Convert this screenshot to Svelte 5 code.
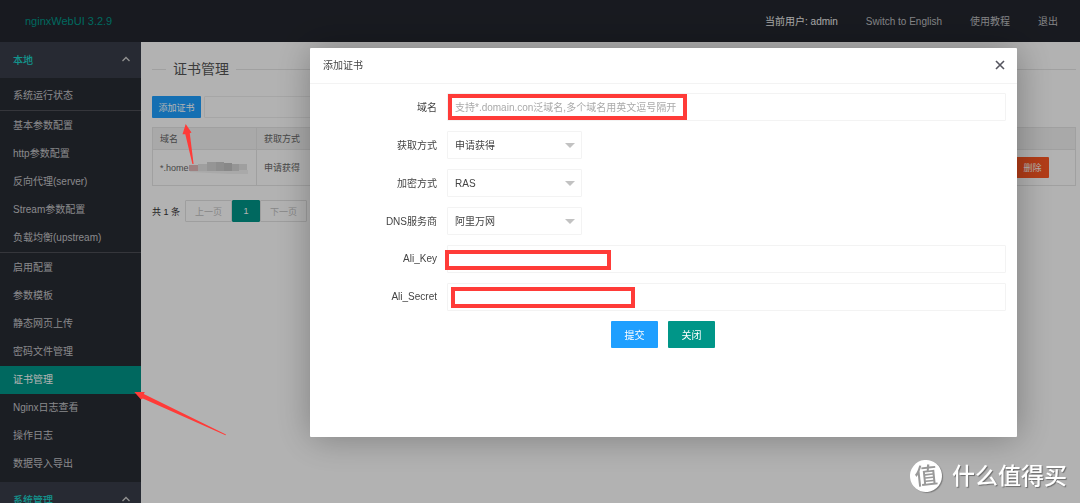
<script lang="ts">
	let domain = $state('');
	let method = $state('申请获得');
	let encryption = $state('RAS');
	let dns = $state('阿里万网');
	let aliKey = $state('');
	let aliSecret = $state('');

	const nav = ['Switch to English', '使用教程', '退出'];

	const groups = [
		['系统运行状态'],
		['基本参数配置', 'http参数配置', '反向代理(server)', 'Stream参数配置', '负载均衡(upstream)'],
		[
			'启用配置',
			'参数模板',
			'静态网页上传',
			'密码文件管理',
			'证书管理',
			'Nginx日志查看',
			'操作日志',
			'数据导入导出'
		]
	];
	const current = '证书管理';
</script>

{#snippet caret()}
	<svg class="caret" viewBox="0 0 10 6" aria-hidden="true">
		<path d="M1.5 5 L5 1.5 L8.5 5" />
	</svg>
{/snippet}

<div class="page">
	<header>
		<div class="logo">nginxWebUI 3.2.9</div>
		<nav>
			<span class="user">当前用户: admin</span>
			{#each nav as item}
				<a href="#top">{item}</a>
			{/each}
		</nav>
	</header>

	<div class="body">
		<aside>
			<button class="group" type="button">本地 {@render caret()}</button>
			<div class="menu">
				{#each groups as group}
					<ul>
						{#each group as item}
							<li><a href="#menu" class:active={item === current}>{item}</a></li>
						{/each}
					</ul>
				{/each}
			</div>
			<button class="group" type="button">系统管理 {@render caret()}</button>
		</aside>

		<main>
			<h1>证书管理</h1>
			<div class="toolbar">
				<button class="add" type="button">添加证书</button>
				<input type="text" aria-label="搜索" />
			</div>
			<table>
				<thead>
					<tr>
						<th class="name">域名</th>
						<th>获取方式</th>
						<th class="ops"></th>
					</tr>
				</thead>
				<tbody>
					<tr>
						<td>
							<div class="host">
								*.home
								<svg class="mosaic" viewBox="0 0 60 14" aria-hidden="true">
									<path fill="#f3f3f3" d="M1 9h58v4H40L1 11z" />
									<path fill="#e3b9b9" d="M0 4h9v6H0z" />
									<path fill="#e4e4e4" d="M9 3h9v7H9zM50 3h8v6h-8z" />
									<path fill="#d6d6d6" d="M18 1h9v9h-9zM43 3h7v7h-7z" />
									<path fill="#cccccc" d="M27 1h8v9h-8z" />
									<path fill="#c3c3c3" d="M35 2h8v8h-8z" />
								</svg>
							</div>
						</td>
						<td>申请获得</td>
						<td class="ops"><button class="delete" type="button">删除</button></td>
					</tr>
				</tbody>
			</table>
			<div class="pager">
				<span>共 1 条</span>
				<div class="pages">
					<button type="button" disabled>上一页</button>
					<button type="button" class="on">1</button>
					<button type="button" disabled>下一页</button>
				</div>
			</div>
		</main>
	</div>
</div>

<div class="shade">
	<div class="dialog" role="dialog" aria-labelledby="dialog-title">
		<div class="title">
			<span id="dialog-title">添加证书</span>
			<button type="button" class="close" aria-label="关闭窗口">
				<svg viewBox="0 0 10 10" aria-hidden="true"><path d="M1 1 L9 9 M9 1 L1 9" /></svg>
			</button>
		</div>
		<form onsubmit={(e) => e.preventDefault()}>
			<div class="row">
				<label for="domain">域名</label>
				<input
					id="domain"
					type="text"
					placeholder="支持*.domain.con泛域名,多个域名用英文逗号隔开"
					bind:value={domain}
				/>
			</div>
			<div class="row">
				<label for="method">获取方式</label>
				<div class="select">
					<select id="method" bind:value={method}>
						<option>申请获得</option>
					</select>
				</div>
			</div>
			<div class="row">
				<label for="encryption">加密方式</label>
				<div class="select">
					<select id="encryption" bind:value={encryption}>
						<option>RAS</option>
					</select>
				</div>
			</div>
			<div class="row">
				<label for="dns">DNS服务商</label>
				<div class="select">
					<select id="dns" bind:value={dns}>
						<option>阿里万网</option>
					</select>
				</div>
			</div>
			<div class="row">
				<label for="key">Ali_Key</label>
				<input id="key" type="text" bind:value={aliKey} />
			</div>
			<div class="row">
				<label for="secret">Ali_Secret</label>
				<input id="secret" type="text" bind:value={aliSecret} />
			</div>
			<div class="buttons">
				<button type="submit" class="submit">提交</button>
				<button type="button">关闭</button>
			</div>
		</form>
	</div>
</div>

<!-- red marks drawn over the page -->
<svg class="marks" width="1080" height="503" aria-hidden="true">
	<g class="box">
		<rect x="450" y="96" width="235" height="22" />
		<rect x="447" y="252" width="162" height="16" />
		<rect x="453" y="289" width="180" height="17" />
	</g>
	<path d="M185.7 124 L191.5 132.5 L189.8 133.2 L193.6 164 L192.4 164 L185.3 134.2 L182.5 134.2 Z" />
	<path d="M134.3 392 L144.8 392 L143.8 394 L226 434.6 L225.5 435.2 L142.8 398.4 L141 399.5 Z" />
</svg>

<div class="watermark">
	<span class="badge">值</span>
	<span>什么值得买</span>
</div>

<style>
	:global(body) {
		overflow: hidden;
		font-family: 'Liberation Sans', 'Noto Sans CJK SC', sans-serif;
		font-size: 10px;
		color: #666;
	}

	button,
	input,
	select {
		box-sizing: border-box;
		margin: 0;
		padding: 0;
		border: 0;
		border-radius: 1px;
		font: inherit;
		color: inherit;
		background: none;
	}

	a {
		color: inherit;
		text-decoration: none;
	}

	.page {
		display: flex;
		flex-direction: column;
		height: 100vh;
		background: #fff;
	}

	header {
		display: flex;
		flex: none;
		align-items: center;
		justify-content: space-between;
		height: 42px;
		padding: 0 22px 0 25px;
		background: #23262e;
	}

	.logo {
		font-size: 11px;
		color: #009688;
	}

	nav {
		display: flex;
		align-items: baseline;
		gap: 28px;
		padding-bottom: 2px;
		color: #bdbec0;
	}

	.user {
		color: #f0f0f0;
	}

	.body {
		display: flex;
		flex: 1;
		min-height: 0;
	}

	aside {
		flex: none;
		width: 141px;
		overflow: hidden;
		background: #393d49;
		color: #c4c5c8;
	}

	.group {
		display: flex;
		align-items: center;
		justify-content: space-between;
		width: 100%;
		height: 36px;
		padding: 0 10px 2px 13px;
		font-weight: 500;
		color: #1bd4cb;
	}

	.caret {
		width: 10px;
		height: 6px;
		fill: none;
		stroke: #d0d0d0;
		stroke-width: 1.3;
	}

	.menu {
		padding: 4px 0;
		background: #282b33;
	}

	ul {
		margin: 0;
		padding: 0;
		list-style: none;
	}

	ul + ul {
		padding-top: 1px;
		border-top: 1px solid #4c4e55;
	}

	li a {
		display: block;
		padding-left: 13px;
		line-height: 28px;
	}

	.active {
		background: #009688;
		color: #fff;
	}

	main {
		flex: 1;
		min-width: 0;
		padding: 16px 4px 0 11px;
		font-size: 9px;
	}

	h1 {
		display: flex;
		align-items: center;
		gap: 7px;
		margin: 0 0 16px;
		font-size: 14px;
		font-weight: 400;
		line-height: 22px;
		color: #555;
	}

	h1::before,
	h1::after {
		content: '';
		width: 14px;
		border-top: 1px solid #e6e6e6;
	}

	h1::after {
		flex: 1;
	}

	.toolbar {
		display: flex;
		gap: 3px;
		margin-bottom: 9px;
	}

	.toolbar input {
		width: 300px;
		border: 1px solid #eee;
	}

	.add {
		width: 49px;
		height: 22px;
		background: #1e9fff;
		color: #fff;
	}

	table {
		width: 100%;
		table-layout: fixed;
		border-collapse: collapse;
	}

	th,
	td {
		box-sizing: border-box;
		height: 36px;
		padding: 0 7px;
		border: 1px solid #e6e6e6;
		font-weight: 400;
		text-align: left;
	}

	th {
		height: 22px;
		background: #f2f2f2;
	}

	.name {
		width: 104px;
	}

	.ops {
		width: 94px;
		padding-right: 26px;
		text-align: right;
	}

	.host {
		display: flex;
		align-items: center;
	}

	.mosaic {
		width: 60px;
		height: 14px;
	}

	.delete {
		width: 33px;
		height: 21px;
		background: #ff5722;
		color: #fff;
	}

	.pager {
		display: flex;
		align-items: center;
		gap: 5px;
		margin-top: 14px;
		color: #333;
	}

	.pages {
		display: flex;
	}

	.pages button {
		width: 47px;
		height: 22px;
		border: 1px solid #e2e2e2;
		color: #c2c2c2;
	}

	.pages .on {
		width: 28px;
		border-color: #009688;
		background: #009688;
		color: #fff;
	}

	.shade {
		position: fixed;
		inset: 0;
		box-sizing: border-box;
		padding: 48px 63px 0 310px;
		background: rgba(0, 0, 0, 0.3);
	}

	.dialog {
		box-sizing: border-box;
		min-height: 389px;
		border-radius: 1px;
		background: #fff;
		box-shadow: 1px 1px 36px rgba(0, 0, 0, 0.3);
	}

	.title {
		display: flex;
		box-sizing: border-box;
		align-items: center;
		justify-content: space-between;
		height: 36px;
		padding: 0 12px 2px 13px;
		border-bottom: 1px solid #f3f3f3;
		color: #444;
	}

	.close {
		display: flex;
	}

	.close svg {
		width: 10px;
		height: 10px;
		fill: none;
		stroke: #55555f;
		stroke-width: 1.6;
	}

	form {
		display: flex;
		flex-direction: column;
		gap: 10px;
		padding: 9px 11px 0 0;
		color: #444;
	}

	.row {
		display: flex;
		align-items: center;
		gap: 10px;
	}

	label {
		width: 127px;
		padding-bottom: 2px;
		text-align: right;
	}

	.row input,
	select {
		height: 28px;
		padding: 0 7px;
		border: 1px solid #f3f3f3;
	}

	.row input {
		flex: 1;
	}

	.row input::placeholder {
		color: #aaa;
	}

	.select {
		position: relative;
		width: 135px;
	}

	.select::after {
		content: '';
		position: absolute;
		top: 12px;
		right: 7px;
		border: 5px solid transparent;
		border-top-color: #c2c2c2;
		pointer-events: none;
	}

	select {
		width: 100%;
		appearance: none;
	}

	.buttons {
		display: flex;
		justify-content: center;
		gap: 10px;
		padding-left: 10px;
	}

	.buttons button {
		width: 47px;
		height: 27px;
		background: #009688;
		color: #fff;
	}

	.buttons .submit {
		background: #1e9fff;
	}

	.marks {
		position: fixed;
		top: 0;
		left: 0;
		fill: #ff3b38;
		pointer-events: none;
	}

	.box {
		fill: none;
		stroke: #ff3b38;
		stroke-width: 4;
	}

	.watermark {
		position: fixed;
		right: 13px;
		bottom: 11px;
		display: flex;
		align-items: center;
		gap: 10px;
		font-size: 23px;
		font-weight: 500;
		line-height: 32px;
		color: #fff;
		text-shadow: 1px 1px 1px rgba(0, 0, 0, 0.4);
	}

	.badge {
		width: 32px;
		height: 32px;
		border-radius: 50%;
		background: #fff;
		box-shadow: 1px 1px 1px rgba(0, 0, 0, 0.3);
		transform: rotate(-6deg);
		text-align: center;
		text-shadow: none;
		color: #999;
	}
</style>
